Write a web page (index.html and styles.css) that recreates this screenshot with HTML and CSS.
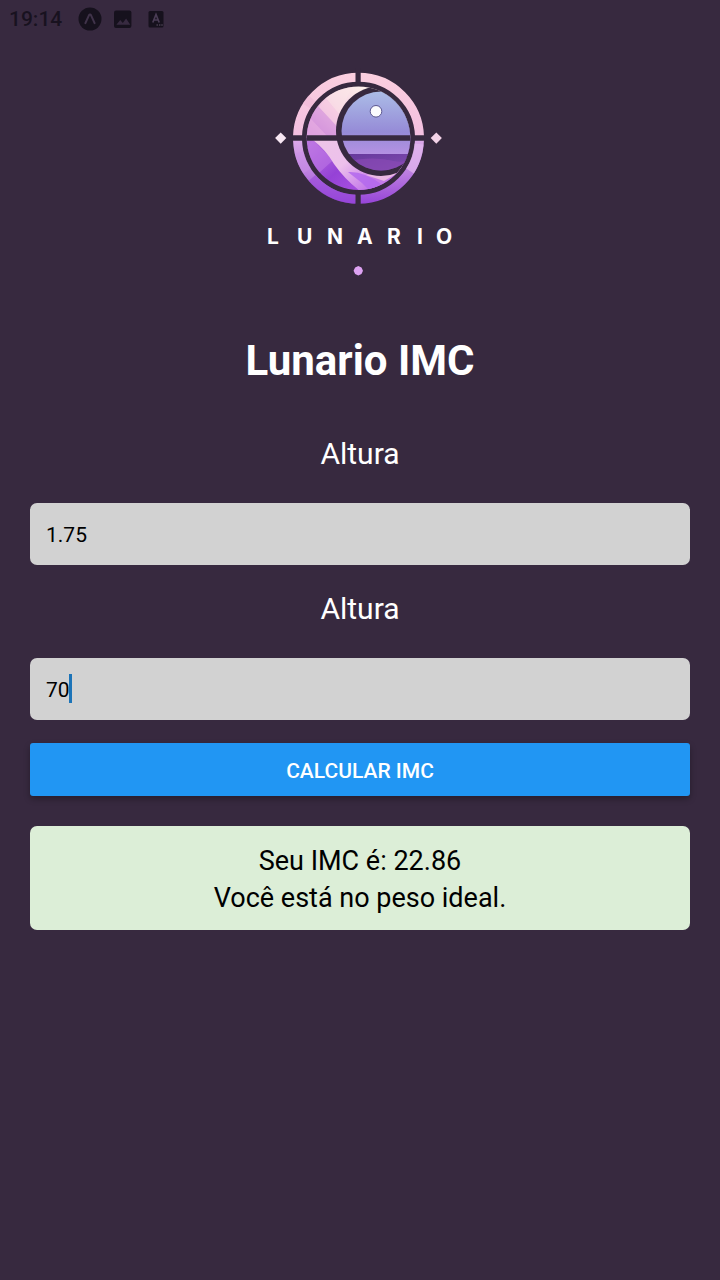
FILE: index.html
```html
<!DOCTYPE html>
<html lang="pt-BR">
<head>
<meta charset="utf-8">
<meta name="viewport" content="width=device-width, initial-scale=1">
<title>Lunario IMC</title>
<link rel="stylesheet" href="styles.css">
</head>
<body>
<header class="status-bar">
  <time class="status-time">19:14</time>
  <svg class="status-icon" viewBox="0 0 24 24" aria-hidden="true">
    <circle cx="12" cy="12" r="11.5" fill="#16111d"/>
    <path d="M7.4 16.2 10.9 8.4Q12 6.8 13.1 8.4L16.6 16.2" fill="none" stroke="#40334a" stroke-width="2" stroke-linecap="round"/>
  </svg>
  <svg class="status-icon" viewBox="0 0 24 24" aria-hidden="true">
    <rect x="3" y="3.5" width="17.4" height="17.4" rx="2" fill="#16111d"/>
    <path d="M5.4 17.8 9.2 13l2.6 3 3.3-4.5 4.2 6.3z" fill="#372a40"/>
  </svg>
  <svg class="status-icon" viewBox="0 0 24 24" aria-hidden="true">
    <rect x="4.5" y="4" width="15" height="16.5" rx="1.5" fill="#16111d"/>
    <path d="M8.8 15.5 12 7.5l3.2 8M9.8 13h4.4" fill="none" stroke="#4a3c55" stroke-width="1.7"/>
    <path d="M12.5 18h1.4M15 18h1.4M17.3 18h1.4" stroke="#66596f" stroke-width="1.2"/>
  </svg>
</header>
<main class="screen">
  <svg class="logo" viewBox="0 0 200 220" role="img" aria-label="Lunario">
    <defs>
      <linearGradient id="ringTop" gradientUnits="userSpaceOnUse" x1="0" y1="12" x2="0" y2="76">
        <stop offset="0" stop-color="#fbcfdf"/><stop offset="1" stop-color="#f3bfe0"/>
      </linearGradient>
      <linearGradient id="ringBottom" gradientUnits="userSpaceOnUse" x1="0" y1="80" x2="0" y2="144">
        <stop offset="0" stop-color="#dca9e9"/><stop offset=".5" stop-color="#bd80e0"/><stop offset="1" stop-color="#9644d8"/>
      </linearGradient>
      <linearGradient id="moonTop" gradientUnits="userSpaceOnUse" x1="98" y1="26" x2="58" y2="76">
        <stop offset="0" stop-color="#fdeeea"/><stop offset=".55" stop-color="#f4c9e2"/><stop offset="1" stop-color="#d695dd"/>
      </linearGradient>
      <linearGradient id="moonLow" gradientUnits="userSpaceOnUse" x1="52" y1="80" x2="96" y2="130">
        <stop offset="0" stop-color="#bb75e0"/><stop offset=".6" stop-color="#9542d6"/><stop offset="1" stop-color="#a64fe0"/>
      </linearGradient>
      <linearGradient id="band" gradientUnits="userSpaceOnUse" x1="62" y1="80" x2="105" y2="128">
        <stop offset="0" stop-color="#edc4e7"/><stop offset=".5" stop-color="#edc0ec"/><stop offset="1" stop-color="#c57be9"/>
      </linearGradient>
      <linearGradient id="sky" x1="0" y1="0" x2="0" y2="1">
        <stop offset="0" stop-color="#abbde7"/><stop offset=".65" stop-color="#968bd7"/><stop offset="1" stop-color="#b491e2"/>
      </linearGradient>
      <linearGradient id="sea" x1="0" y1="0" x2="1" y2="1">
        <stop offset="0" stop-color="#63379a"/><stop offset="1" stop-color="#8750b5"/>
      </linearGradient>
      <clipPath id="disc"><circle cx="98.5" cy="78.2" r="51.8"/></clipPath>
      <clipPath id="planet"><circle cx="121" cy="71" r="39.5"/></clipPath>
      <clipPath id="upper"><path d="M0 0h200v75.3H0z"/></clipPath>
      <clipPath id="lower"><path d="M0 80.7h200V220H0z"/></clipPath>
    </defs>
    <g fill="none" stroke-width="9">
      <circle cx="98.5" cy="78.2" r="61" stroke="url(#ringTop)" clip-path="url(#upper)"/>
      <circle cx="98.5" cy="78.2" r="61" stroke="url(#ringBottom)" clip-path="url(#lower)"/>
      <path d="M39.2 92.5A61 61 0 0 0 47 111" stroke="#c990e6" stroke-opacity=".45"/>
      <path d="M52 118A61 61 0 0 0 95 139.2" stroke="#9545d8" stroke-opacity=".55"/>
      <path d="M150 111A61 61 0 0 0 159 84" stroke="#e3b8ee" stroke-opacity=".7"/>
      <path d="M46.5 46A61 61 0 0 1 52 38.5" stroke="#eaaed3" stroke-opacity=".4"/>
    </g>
    <g clip-path="url(#disc)">
      <path d="M40 20h118v58H40z" fill="url(#moonTop)"/>
      <path d="M50 37 59 47 80 70V78H40z" fill="#cf8edc" fill-opacity=".5"/>
      <path d="M59 47 76 65 80 52 68 37z" fill="#f6cde2" fill-opacity=".6"/>
      <path d="M50 58 69 78H40z" fill="#f0b8e4" fill-opacity=".45"/>
      <path d="M66 38 80 55 92 25H75z" fill="#fce6e7" fill-opacity=".55"/>
      <path d="M40 78h118v60H40z" fill="url(#moonLow)"/>
      <path d="M52 80 73.3 100 59 113 40 100z" fill="#bf78e6" fill-opacity=".55"/>
      <path d="M53 80H82L160 102 146 138H110Q88 124 74 104 66 90 53 80z" fill="url(#band)"/>
      <path d="M88 112Q104 111 121 124L110 131 102 123z" fill="#b368ed" fill-opacity=".85"/>
      <path d="M106 115 152 105 124 121z" fill="#eab8e3"/>
      <circle cx="121" cy="71" r="45" fill="#37293f"/>
      <g clip-path="url(#planet)">
        <path d="M78 31h78v63H78z" fill="url(#sky)"/>
        <path d="M78 94h78v20H78z" fill="url(#sea)"/>
        <path d="M80 103Q112 95 134 101 145 104 153 96V114H80z" fill="#8b4ab5" fill-opacity=".65"/>
      </g>
      <path d="M40 75.3h120v5.4H40z" fill="#37293f"/>
    </g>
    <path d="M95.5 8h5.2v18h-5.2zM95.5 130h5.2v18h-5.2z" fill="#37293f"/>
    <circle cx="116" cy="51.3" r="5.8" fill="#fbfbfd" stroke="#5c5790" stroke-width="1"/>
    <path d="m20.7 72.5 5.6 5.6-5.6 5.6-5.6-5.6z" fill="#f8e7f3"/>
    <path d="m176.3 72.5 5.6 5.6-5.6 5.6-5.6-5.6z" fill="#f3d2e7"/>
    <path d="m98.3 206 3.2 1.5 1.5 3.2-1.5 3.2-3.2 1.6-3.2-1.6-1.5-3.2 1.5-3.2z" fill="#dda2f2"/>
    <text class="wordmark" x="7 37 67 97 127 157 176" y="184">LUNARIO</text>
  </svg>
  <h1 class="title">Lunario IMC</h1>
  <form class="form">
    <label class="label" for="altura">Altura</label>
    <div class="field"><input class="input" id="altura" type="text" inputmode="decimal" value="1.75"></div>
    <label class="label" for="peso">Altura</label>
    <div class="field">
      <input class="input" id="peso" type="text" inputmode="decimal" value="70">
      <span class="caret" aria-hidden="true"></span>
    </div>
    <button class="button" type="button">CALCULAR IMC</button>
    <output class="result" for="altura peso">
      <span>Seu IMC é: 22.86</span>
      <span>Você está no peso ideal.</span>
    </output>
  </form>
</main>
</body>
</html>
```
FILE: styles.css
```css
* {
  box-sizing: border-box;
}

body {
  margin: 0;
  min-height: 100vh;
  background: #37293f;
  color: #fff;
  font-family: Roboto, "Noto Sans", sans-serif;
}

.status-bar {
  display: flex;
  align-items: center;
  height: 37px;
  padding-left: 9px;
  color: #18121f;
}

.status-time {
  margin-right: 16px;
  font-size: 21px;
  font-weight: 500;
  line-height: 24px;
}

.status-icon {
  width: 24px;
  height: 24px;
  margin-right: 9px;
}

.screen {
  display: flex;
  flex-direction: column;
  align-items: center;
  padding: 23px 30px;
}

.logo {
  width: 200px;
  height: 220px;
}

.wordmark {
  fill: #fff;
  font-family: Inter, sans-serif;
  font-size: 21px;
  font-weight: 700;
}

.title {
  margin: 56px 0 0;
  font-size: 42px;
  font-weight: 700;
  line-height: 50px;
}

.form {
  display: flex;
  flex-direction: column;
  align-self: stretch;
  margin-top: 24px;
}

.label {
  margin: 26px 0 32px;
  font-size: 30px;
  line-height: 35px;
  text-align: center;
}

.field {
  position: relative;
}

.input {
  display: block;
  width: 100%;
  height: 62px;
  padding: 2px 16px 0;
  border: 0;
  border-radius: 7px;
  background: #d2d2d2;
  color: #000;
  font: inherit;
  font-size: 21px;
}

.caret {
  position: absolute;
  top: 16px;
  left: 39px;
  width: 3px;
  height: 29px;
  background: #1c74b8;
}

.button {
  margin-top: 23px;
  height: 53px;
  padding: 2px 12px 0;
  border: 0;
  border-radius: 3px;
  background: #2196f3;
  box-shadow: 0 3px 6px rgba(0, 0, 0, 0.3);
  color: #fff;
  font: inherit;
  font-size: 21px;
  font-weight: 500;
}

.result {
  display: flex;
  flex-direction: column;
  margin-top: 30px;
  padding: 17px 15px 13px;
  border-radius: 7px;
  background: #dceed7;
  color: #000;
  font-size: 27px;
  line-height: 37px;
  text-align: center;
}
```
